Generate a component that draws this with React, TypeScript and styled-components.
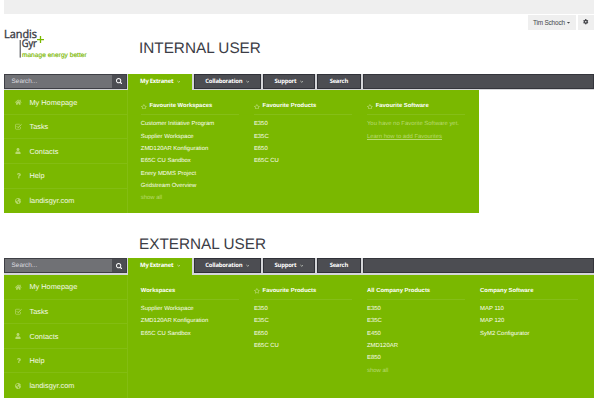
import React from 'react';
import styled, { createGlobalStyle } from 'styled-components';
import {
  FaHome, FaUser, FaQuestion, FaGlobeAmericas, FaRegStar, FaCog, FaSearch, FaCaretDown,
} from 'react-icons/fa';

const green = '#7ab800';
const slate = '#4c4d52';

const GlobalStyle = createGlobalStyle`
  * { box-sizing: border-box; }
  body {
    margin: 0;
    background: #fff;
    font-family: 'Liberation Sans', Arial, sans-serif;
    text-rendering: geometricPrecision;
    overflow: hidden;
  }
`;

const Page = styled.div`
  width: 600px;
  height: 400px;
  padding: 0 5.6px 0 4.4px;
  background: #fff;
  white-space: nowrap;
`;

const Banner = styled.div`
  height: 13.5px;
  background: #efefef;
`;

const Header = styled.header`
  display: flex;
  height: 60px;
`;

const Brand = styled.svg`
  display: block;
  width: 90px;
  height: 36px;
  margin: 14.5px 0 0 -0.4px;
`;

const TitleSlot = styled.div<{ $height: number; $left: number }>`
  height: ${p => p.$height}px;
  padding-left: ${p => p.$left}px;
  overflow: hidden;
`;

const Title = styled.h1<{ $top: number }>`
  margin: 0;
  padding-top: ${p => p.$top}px;
  font-size: 15.3px;
  line-height: 18px;
  font-weight: 400;
  color: #3c3d46;
`;

const UserTools = styled.div`
  display: flex;
  gap: 2px;
  margin-left: auto;
  padding-top: 1px;
`;

const ToolButton = styled.button<{ $width: number }>`
  display: flex;
  align-items: center;
  justify-content: center;
  gap: 1.5px;
  width: ${p => p.$width}px;
  height: 15px;
  padding: 0;
  border: 0;
  background: #efefef;
  color: #444549;
  font: 6.4px/15px 'Liberation Sans', Arial, sans-serif;
  letter-spacing: -0.17px;
`;

const NavBar = styled.nav`
  display: flex;
  height: 16.5px;
  background: #d5d6d9;
`;

const SearchBox = styled.div`
  display: flex;
  width: 123px;
  height: 15px;
  background: #707175;
  border: 1px solid #3e3f45;
  color: #dedee0;
`;

const SearchField = styled.span`
  flex: 1;
  padding-left: 6.2px;
  font-size: 6.4px;
  line-height: 13px;
`;

const SearchButton = styled.span`
  display: flex;
  align-items: center;
  justify-content: center;
  width: 14.5px;
  background: ${slate};
  color: #fff;
`;

const Tab = styled.a<{ $width: number; $active?: boolean }>`
  display: flex;
  align-items: center;
  justify-content: center;
  gap: 3.3px;
  width: ${p => p.$width}px;
  height: ${p => (p.$active ? 16.5 : 15)}px;
  margin-left: ${p => (p.$active ? 1 : 1.7)}px;
  padding-bottom: ${p => (p.$active ? 1.5 : 0)}px;
  border: solid ${p => (p.$active ? green : '#303138')};
  border-width: ${p => (p.$active ? '0' : '1px 0.5px')};
  background: ${p => (p.$active ? green : slate)};
  color: #fff;
  font: 700 5.9px/13px 'Open Sans', 'Noto Sans', sans-serif;
  letter-spacing: -0.24px;
`;

const BarRest = styled.div`
  flex: 1;
  height: 15px;
  margin-left: 1.7px;
  background: ${slate};
  border: 1px solid #34353b;
`;

const Panel = styled.div<{ $width: number }>`
  display: flex;
  width: ${p => p.$width}px;
  height: 123.3px;
  background: ${green};
  color: #f2f8e2;
`;

const Sidebar = styled.aside`
  width: 124px;
  padding-top: 0.3px;
  border-right: 1px solid #83bd12;
`;

const SideLink = styled.a`
  display: flex;
  align-items: center;
  height: 24.6px;
  padding-left: 10.6px;
  border-bottom: 1px solid #83bd12;
  font-size: 7.35px;
  color: #f4f9e8;

  &:last-child { border-bottom: 0; }
`;

const SideIcon = styled.span`
  display: flex;
  justify-content: center;
  width: 7px;
  margin-right: 7.5px;
  color: #b9da72;
`;

const Columns = styled.div`
  display: flex;
  gap: 15.1px;
  padding: 11.2px 0 0 12.4px;
`;

const Column = styled.section`
  width: 98px;
`;

const ColumnTitle = styled.h2`
  display: flex;
  align-items: center;
  gap: 2.9px;
  height: 14px;
  margin: 0 0 3.2px;
  padding-bottom: 2.4px;
  border-bottom: 1px solid #85be18;
  color: #fff;
  font-size: 5.9px;
  line-height: 8px;
  font-weight: 700;

  svg { opacity: 0.55; }
`;

const Item = styled.a<{ $faded?: boolean; $underlined?: boolean }>`
  display: block;
  height: 12.3px;
  font-size: 5.93px;
  line-height: 12.3px;
  color: ${p => (p.$faded ? '#b9da72' : '#fafdf2')};
  text-decoration: ${p => (p.$underlined ? 'underline' : 'none')};
  text-decoration-thickness: 0.5px;
  text-underline-offset: 1px;
`;

type Entry = { text: string; faded?: boolean; underlined?: boolean };
type Group = { title: string; star?: boolean; entries: Entry[] };

const list = (...texts: string[]): Entry[] => texts.map(text => ({ text }));
const showAll: Entry = { text: 'show all', faded: true };

const internalGroups: Group[] = [
  {
    title: 'Favourite Workspaces',
    star: true,
    entries: [
      ...list('Customer Initiative Program', 'Supplier Workspace', 'ZMD120AR Konfiguration',
        'E65C CU Sandbox', 'Enery MDMS Project', 'Gridstream Overview'),
      showAll,
    ],
  },
  { title: 'Favourite Products', star: true, entries: list('E350', 'E35C', 'E650', 'E65C CU') },
  {
    title: 'Favourite Software',
    star: true,
    entries: [
      { text: 'You have no Favorite Software yet.', faded: true },
      { text: 'Learn how to add Favourites', faded: true, underlined: true },
    ],
  },
];

const externalGroups: Group[] = [
  { title: 'Workspaces', entries: list('Supplier Workspace', 'ZMD120AR Konfiguration', 'E65C CU Sandbox') },
  { title: 'Favourite Products', star: true, entries: list('E350', 'E35C', 'E650', 'E65C CU') },
  { title: 'All Company Products', entries: [...list('E350', 'E35C', 'E450', 'ZMD120AR', 'E850'), showAll] },
  { title: 'Company Software', entries: list('MAP 110', 'MAP 120', 'SyM2 Configurator') },
];

function TaskIcon() {
  return (
    <svg width="7" height="7" viewBox="0 0 14 14" fill="none" stroke="currentColor">
      <path d="M11 8v3.2a1.3 1.3 0 0 1-1.3 1.3H2.3A1.3 1.3 0 0 1 1 11.200V3.800a1.300 1.300 0 0 1 1.300-1.300H9.500" strokeWidth="1.3" />
      <path d="M3.500 6.500l2.600 2.700L13 2.800" strokeWidth="2" />
    </svg>
  );
}

function Chevron() {
  return (
    <svg width="3.600" height="3" viewBox="0 0 7.200 6" fill="none" stroke="#d6d9cf" strokeWidth="1.500">
      <path d="M0.800 2l2.800 2.600L6.400 2" />
    </svg>
  );
}

const sideLinks = [
  { icon: <FaHome size={6.6} />, label: 'My Homepage' },
  { icon: <TaskIcon />, label: 'Tasks' },
  { icon: <FaUser size={6} />, label: 'Contacts' },
  { icon: <FaQuestion size={5.6} />, label: 'Help' },
  { icon: <FaGlobeAmericas size={6.2} />, label: 'landisgyr.com' },
];

function Logo() {
  return (
    <Brand viewBox="0 0 90 36" fontFamily="'Open Sans', sans-serif">
      <g fill="#3c3d46" stroke="#3c3d46" strokeWidth="0.4">
        <text x="0" y="10.2" fontSize="11.3" textLength="33" lengthAdjust="spacingAndGlyphs">Landis</text>
        <text x="17.700" y="19.300" fontSize="10.600" textLength="15.200" lengthAdjust="spacingAndGlyphs">Gyr</text>
      </g>
      <path d="M16.200 12v17.600" stroke="#3c3d46" strokeWidth="1" />
      <path d="M33 11.600h7M36.500 8.100v7" stroke={green} strokeWidth="1.300" />
      <text x="17.900" y="29.200" fontFamily="'Liberation Sans', Arial, sans-serif" fontSize="6.600" fill={green}
        stroke={green} strokeWidth="0.150" textLength="64.800">manage energy better</text>
    </Brand>
  );
}

function Navigation() {
  return (
    <NavBar>
      <SearchBox>
        <SearchField>Search...</SearchField>
        <SearchButton><FaSearch size={6.5} /></SearchButton>
      </SearchBox>
      <Tab $width={63.5} $active>My Extranet<Chevron /></Tab>
      <Tab $width={67.4}>Collaboration<Chevron /></Tab>
      <Tab $width={52.5}>Support<Chevron /></Tab>
      <Tab $width={44}>Search</Tab>
      <BarRest />
    </NavBar>
  );
}

function Menu({ groups, width }: { groups: Group[]; width: number }) {
  return (
    <Panel $width={width}>
      <Sidebar>
        {sideLinks.map(link => (
          <SideLink key={link.label}><SideIcon>{link.icon}</SideIcon>{link.label}</SideLink>
        ))}
      </Sidebar>
      <Columns>
        {groups.map(group => (
          <Column key={group.title}>
            <ColumnTitle>{group.star && <FaRegStar size={5.8} />}{group.title}</ColumnTitle>
            {group.entries.map(entry => (
              <Item key={entry.text} $faded={entry.faded} $underlined={entry.underlined}>{entry.text}</Item>
            ))}
          </Column>
        ))}
      </Columns>
    </Panel>
  );
}

export default function App() {
  return (
    <>
      <GlobalStyle />
      <Page>
        <Banner />
        <Header>
          <Logo />
          <TitleSlot $height={60} $left={45}><Title $top={26.5}>INTERNAL USER</Title></TitleSlot>
          <UserTools>
            <ToolButton $width={47.5}>Tim Schoch<FaCaretDown size={5} /></ToolButton>
            <ToolButton $width={16.5}><FaCog size={5.5} /></ToolButton>
          </UserTools>
        </Header>
        <Navigation />
        <Menu groups={internalGroups} width={475} />
        <TitleSlot $height={45} $left={134.6}><Title $top={22.5}>EXTERNAL USER</Title></TitleSlot>
        <Navigation />
        <Menu groups={externalGroups} width={590} />
      </Page>
    </>
  );
}
